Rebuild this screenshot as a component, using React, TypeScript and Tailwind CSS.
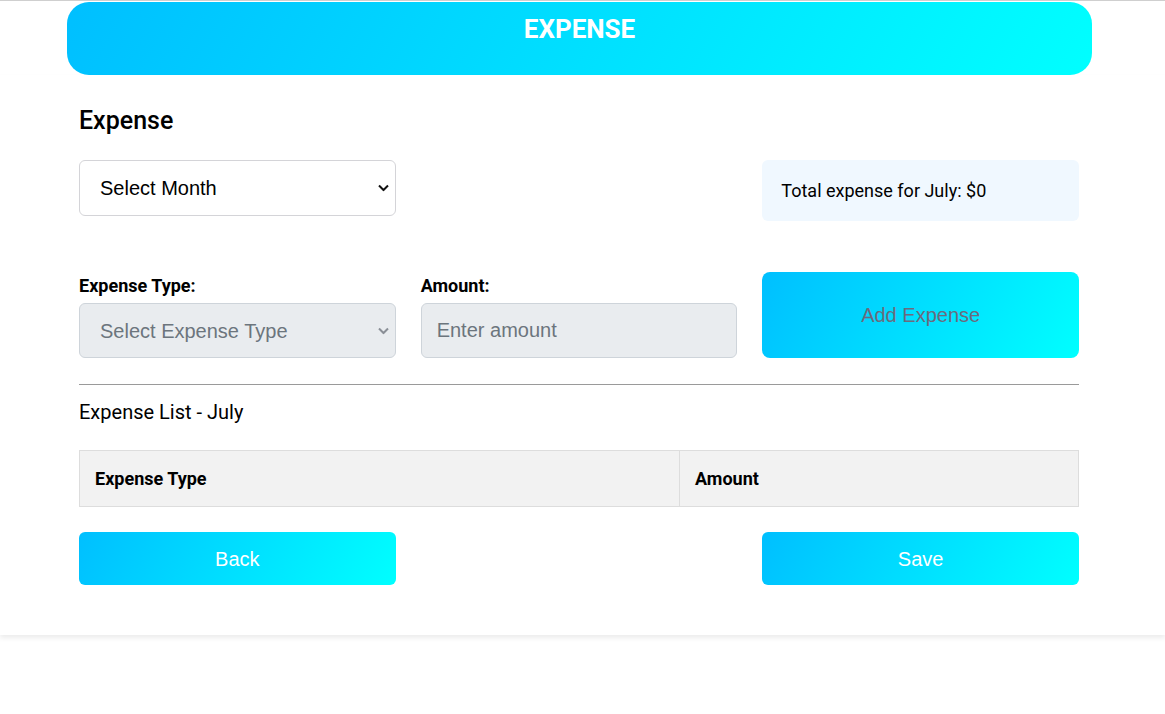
import React from "react";

function Chevron({ color }: { color: string }) {
  return (
    <svg
      width="11"
      height="7"
      viewBox="0 0 11 7"
      className="pointer-events-none absolute right-[7px] top-1/2 -translate-y-1/2"
    >
      <path d="M1 1l4.5 4.5L10 1" fill="none" stroke={color} strokeWidth="2" />
    </svg>
  );
}

export default function App() {
  const gradient = "bg-[linear-gradient(120deg,#00bfff,#00ffff)]";

  return (
    <div className="min-h-[714px] bg-white font-['Roboto',sans-serif] text-black">
      {/* top banner */}
      <header className="h-[75px] border-t border-[#cfcfcf] pt-[1px] shadow-[0_1px_1px_rgba(0,0,0,0.02)]">
        <div className={`ml-[67px] h-[73px] w-[1025px] rounded-[22px] ${gradient} pt-[12px] text-center`}>
          <h1 className="text-[26px] font-bold leading-[30px] text-white">EXPENSE</h1>
        </div>
      </header>

      {/* card */}
      <section className="bg-white pb-[50px] shadow-[0_3px_5px_rgba(0,0,0,0.08)]">
        <div className="ml-[79px] w-[1000px] pt-[32px]">
          <h2 className="text-[25px] font-medium leading-[28px]">Expense</h2>

          <div className="mt-[25px] grid grid-cols-3 items-start gap-x-[25px]">
            <div className="relative">
              <select className="h-[56px] w-full appearance-none rounded-[6px] border border-[#d4d4d8] bg-white pl-[20px] font-['Liberation_Sans',Arial,sans-serif] text-[20px] text-black outline-none">
                <option>Select Month</option>
              </select>
              <Chevron color="#111" />
            </div>
            <div />
            <div className="flex h-[61px] items-center rounded-[6px] bg-[#f0f8ff] px-[19px] text-[18px]">
              Total expense for July: $0
            </div>
          </div>

          <div className="mt-[51px] grid grid-cols-3 items-end gap-x-[25px]">
            <div>
              <label className="mb-[7px] block text-[18px] font-bold leading-[21px]">Expense Type:</label>
              <div className="relative">
                <select
                  disabled
                  className="h-[55px] w-full appearance-none rounded-[6px] border border-[#ced4da] bg-[#e9ecef] pl-[20px] font-['Liberation_Sans',Arial,sans-serif] text-[20px] text-[#6c757d] opacity-100 outline-none"
                >
                  <option>Select Expense Type</option>
                </select>
                <Chevron color="#8a8f96" />
              </div>
            </div>
            <div>
              <label className="mb-[7px] block text-[18px] font-bold leading-[21px]">Amount:</label>
              <input
                disabled
                placeholder="Enter amount"
                className="h-[55px] w-full rounded-[6px] border border-[#ced4da] bg-[#e9ecef] pl-[15px] font-['Liberation_Sans',Arial,sans-serif] text-[20px] outline-none placeholder:text-[#6c757d]"
              />
            </div>
            <button
              disabled
              className={`h-[86px] w-full rounded-[8px] ${gradient} font-['Liberation_Sans',Arial,sans-serif] text-[20px] text-[#6b6b7d]`}
            >
              Add Expense
            </button>
          </div>

          <div className="mt-[26px] h-px bg-[#9a9a9a]" />

          <p className="mt-[15px] text-[20px] leading-[24px]">Expense List - July</p>

          <table className="mt-[26px] w-full border-collapse">
            <thead>
              <tr className="bg-[#f2f2f2]">
                <th className="h-[56px] w-[600px] border border-[#dddddd] px-[15px] text-left text-[18px] font-bold">
                  Expense Type
                </th>
                <th className="h-[56px] border border-[#dddddd] px-[15px] text-left text-[18px] font-bold">
                  Amount
                </th>
              </tr>
            </thead>
          </table>

          <div className="mt-[25px] grid grid-cols-3 gap-x-[25px]">
            <button className={`h-[53px] rounded-[6px] ${gradient} font-['Liberation_Sans',Arial,sans-serif] text-[20px] text-white`}>
              Back
            </button>
            <div />
            <button className={`h-[53px] rounded-[6px] ${gradient} font-['Liberation_Sans',Arial,sans-serif] text-[20px] text-white`}>
              Save
            </button>
          </div>
        </div>
      </section>
    </div>
  );
}
